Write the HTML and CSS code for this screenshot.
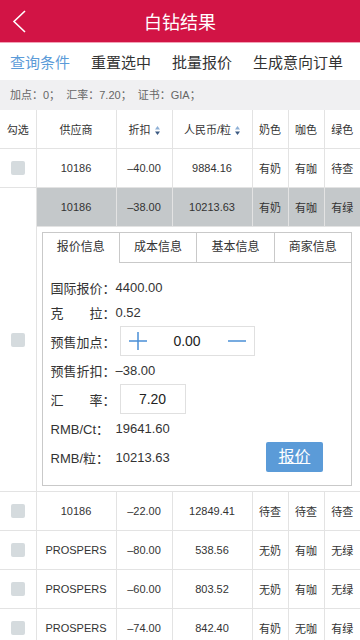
FILE: index.html
```html
<!DOCTYPE html>
<html lang="zh-CN">
<head>
    <meta charset="UTF-8">
    <meta name="viewport" content="width=device-width, initial-scale=1.0">
    <title>白钻结果</title>
    <link rel="stylesheet" href="styles.css">
</head>
<body>
    <div class="header">
        <span class="back">
            <svg width="16" height="24" viewBox="0 0 16 24"><polyline points="13,2 2,12.5 13,23" fill="none" stroke="#fff" stroke-width="1.6"/></svg>
        </span>
        <span class="title">白钻结果</span>
        <span class="back"></span>
    </div>

    <div class="menu">
        <span class="menu-item active">查询条件</span>
        <span class="menu-item">重置选中</span>
        <span class="menu-item">批量报价</span>
        <span class="menu-item">生成意向订单</span>
    </div>

    <div class="summary">加点：0；&nbsp; 汇率：7.20；&nbsp; 证书：GIA；</div>

    <table class="result">
        <colgroup>
            <col style="width:36px">
            <col style="width:80px">
            <col style="width:56px">
            <col style="width:80px">
            <col style="width:36px">
            <col style="width:36px">
            <col style="width:36px">
        </colgroup>
        <tr class="head">
            <th>勾选</th>
            <th>供应商</th>
            <th>折扣 <svg class="sort" width="5" height="9" viewBox="0 0 5 9"><path d="M2.5 0L5 3.6H0z" fill="#8eb0d6"/><path d="M2.5 9L5 5.4H0z" fill="#3c5a82"/></svg></th>
            <th>人民币/粒 <svg class="sort" width="5" height="9" viewBox="0 0 5 9"><path d="M2.5 0L5 3.6H0z" fill="#8eb0d6"/><path d="M2.5 9L5 5.4H0z" fill="#3c5a82"/></svg></th>
            <th>奶色</th>
            <th>咖色</th>
            <th>绿色</th>
        </tr>
        <tr>
            <td><span class="check"></span></td>
            <td>10186</td>
            <td>–40.00</td>
            <td>9884.16</td>
            <td>有奶</td>
            <td>有咖</td>
            <td>待查</td>
        </tr>
        <tr class="selected">
            <td class="check-cell" rowspan="2"><span class="check"></span></td>
            <td>10186</td>
            <td>–38.00</td>
            <td>10213.63</td>
            <td>有奶</td>
            <td>有咖</td>
            <td>有绿</td>
        </tr>
        <tr>
            <td class="detail" colspan="6">
                <div class="panel">
                    <div class="panel-tabs">
                        <span class="panel-tab active">报价信息</span>
                        <span class="panel-tab">成本信息</span>
                        <span class="panel-tab">基本信息</span>
                        <span class="panel-tab">商家信息</span>
                    </div>
                    <div class="panel-body">
                        <div class="line"><span class="label">国际报价：</span>4400.00</div>
                        <div class="line"><span class="label">克　　拉：</span>0.52</div>
                        <div class="line">
                            <span class="label">预售加点：</span>
                            <span class="stepper">
                                <svg width="18" height="18" viewBox="0 0 18 18"><path d="M9 0V18M0 9H18" stroke="#4a8fd6" stroke-width="1.5"/></svg>
                                <span class="stepper-value">0.00</span>
                                <svg width="18" height="18" viewBox="0 0 18 18"><path d="M0 9H18" stroke="#4a8fd6" stroke-width="1.5"/></svg>
                            </span>
                        </div>
                        <div class="line"><span class="label">预售折扣：</span>–38.00</div>
                        <div class="line">
                            <span class="label">汇　　率：</span>
                            <span class="rate">7.20</span>
                        </div>
                        <div class="line"><span class="label">RMB/Ct：</span>19641.60</div>
                        <div class="line">
                            <span class="label">RMB/粒：</span>10213.63
                            <span class="quote-btn">报价</span>
                        </div>
                    </div>
                </div>
            </td>
        </tr>
        <tr>
            <td><span class="check"></span></td>
            <td>10186</td>
            <td>–22.00</td>
            <td>12849.41</td>
            <td>待查</td>
            <td>待查</td>
            <td>待查</td>
        </tr>
        <tr>
            <td><span class="check"></span></td>
            <td>PROSPERS</td>
            <td>–80.00</td>
            <td>538.56</td>
            <td>无奶</td>
            <td>有咖</td>
            <td>无绿</td>
        </tr>
        <tr>
            <td><span class="check"></span></td>
            <td>PROSPERS</td>
            <td>–60.00</td>
            <td>803.52</td>
            <td>无奶</td>
            <td>有咖</td>
            <td>无绿</td>
        </tr>
        <tr>
            <td><span class="check"></span></td>
            <td>PROSPERS</td>
            <td>–74.00</td>
            <td>842.40</td>
            <td>有奶</td>
            <td>无咖</td>
            <td>有绿</td>
        </tr>
    </table>
</body>
</html>
```

FILE: styles.css
```css
body {
    margin: 0;
    background-color: #fff;
    color: #333;
    font-family: "Liberation Sans", "Noto Sans CJK SC", sans-serif;
}

.header {
    height: 42px;
    background-color: #d21445;
    border-bottom: 1px solid #f2a2b6;
    display: flex;
    align-items: center;
}

.back {
    width: 42px;
    padding-left: 12px;
    box-sizing: border-box;
    display: flex;
    align-items: center;
}

.title {
    flex: 1;
    text-align: center;
    color: #fff;
    font-size: 18px;
}

.menu {
    height: 37px;
    display: flex;
    align-items: center;
    justify-content: space-between;
    padding: 0 17px 0 10px;
    font-size: 15px;
    color: #333;
}

.menu-item.active {
    color: #5b9bd8;
}

.summary {
    height: 30px;
    line-height: 30px;
    background-color: #f0f0f2;
    padding-left: 10px;
    font-size: 11px;
    color: #666;
}

.result {
    width: 360px;
    border-collapse: collapse;
    table-layout: fixed;
}

.result th,
.result td {
    border: 1px solid #e3e3e3;
    height: 38px;
    padding: 0;
    text-align: center;
    font-size: 11px;
    font-weight: normal;
    color: #333;
}

.result tr > :first-child {
    border-left: none;
}

.result tr > :last-child {
    border-right: none;
}

.result .head th {
    border-top: none;
}

.sort {
    vertical-align: -1px;
    margin-left: 1px;
}

.check {
    display: inline-block;
    width: 14px;
    height: 14px;
    border-radius: 2px;
    background-color: #d5dbde;
    vertical-align: middle;
}

.selected td {
    background-color: #c4c8ca;
}

.selected td.check-cell {
    background-color: #fff;
    border-right: 1px solid #e3e3e3;
}

.result td.detail {
    padding: 5px 8px 5px 5px;
    height: auto;
    text-align: left;
    vertical-align: top;
}

.panel {
    border: 1px solid #c9c9c9;
}

.panel-tabs {
    display: flex;
    height: 30px;
}

.panel-tab {
    flex: 1;
    text-align: center;
    line-height: 29px;
    font-size: 12px;
    color: #333;
    border-bottom: 1px solid #c9c9c9;
    border-left: 1px solid #c9c9c9;
}

.panel-tab:first-child {
    border-left: none;
}

.panel-tab.active {
    border-bottom-color: transparent;
}

.panel-body {
    padding: 13px 0 13px 8px;
    display: flex;
    flex-direction: column;
    gap: 3px;
}

.line {
    min-height: 22px;
    display: flex;
    align-items: center;
    font-size: 13px;
    color: #333;
}

.label {
    width: 65px;
    flex-shrink: 0;
}

.stepper {
    width: 135px;
    height: 30px;
    box-sizing: border-box;
    margin-left: 4px;
    padding: 0 8px;
    border: 1px solid #e0e0e0;
    display: flex;
    align-items: center;
    justify-content: space-between;
}

.stepper-value,
.rate {
    font-size: 14px;
    color: #222;
}

.rate {
    width: 66px;
    height: 30px;
    box-sizing: border-box;
    margin-left: 4px;
    border: 1px solid #e0e0e0;
    text-align: center;
    line-height: 28px;
}

.quote-btn {
    width: 57px;
    height: 30px;
    margin-left: auto;
    margin-right: 28px;
    background-color: #5b9bd8;
    border-radius: 2px;
    color: #fff;
    font-size: 16px;
    line-height: 30px;
    text-align: center;
    text-decoration: underline;
}
```
